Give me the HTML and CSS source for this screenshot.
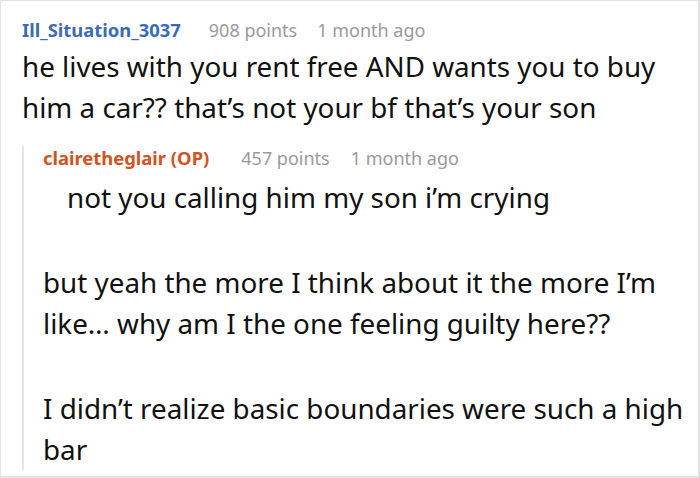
FILE: index.html
```html
<!DOCTYPE html>
<html>
<head>
<meta charset="utf-8">
<link rel="stylesheet" href="styles.css">
</head>
<body>
<div class="frame">
  <div class="comment">
    <div class="meta">
      <span class="user">Ill_Situation_3037</span>
      <span class="points">908 points</span>
      <span class="time">1 month ago</span>
    </div>
    <p class="text">he lives with you rent free AND wants you to buy him a car?? that’s not your bf that’s your son</p>
  </div>
  <div class="reply">
    <div class="meta">
      <span class="user op">clairetheglair (OP)</span>
      <span class="points">457 points</span>
      <span class="time">1 month ago</span>
    </div>
    <p class="text indent">not you calling him my son i’m crying</p>
    <p class="text">but yeah the more I think about it the more I’m like… why am I the one feeling guilty here??</p>
    <p class="text last">I didn’t realize basic boundaries were such a high bar</p>
  </div>
</div>
</body>
</html>
```

FILE: styles.css
```css
html, body {
  margin: 0;
  padding: 0;
  background: #fff;
}
.frame {
  box-sizing: border-box;
  width: 700px;
  height: 478px;
  border: 1px solid #e2e2e2;
  border-right-width: 2px;
  border-bottom-width: 2px;
  padding: 17px 8px 0 21px;
  font-family: "Noto Sans", sans-serif;
  color: #111;
  overflow: hidden;
}
.meta {
  font-size: 18px;
  line-height: 24px;
  display: flex;
}
.user {
  font-weight: 700;
  font-size: 18.4px;
  color: #3a6bb9;
  margin-right: 28px;
}
.user.op {
  color: #d1531f;
  margin-right: 32px;
}
.points, .time {
  color: #9a9a9a;
}
.points {
  margin-right: 20px;
}
.reply .points {
  margin-right: 21px;
}
.text {
  font-size: 27.8px;
  line-height: 41px;
  margin: 0;
}
.comment .text {
  margin-top: 4px;
}
.reply {
  margin-top: 34px;
  border-left: 2px solid #e4e4e4;
  padding-left: 19px;
}
.reply .meta {
  margin-top: -16px;
  margin-bottom: 7px;
}
.indent {
  padding-left: 24px;
}
.reply .text + .text {
  margin-top: 44px;
}
.reply .last {
  margin-bottom: -12px;
}
```
